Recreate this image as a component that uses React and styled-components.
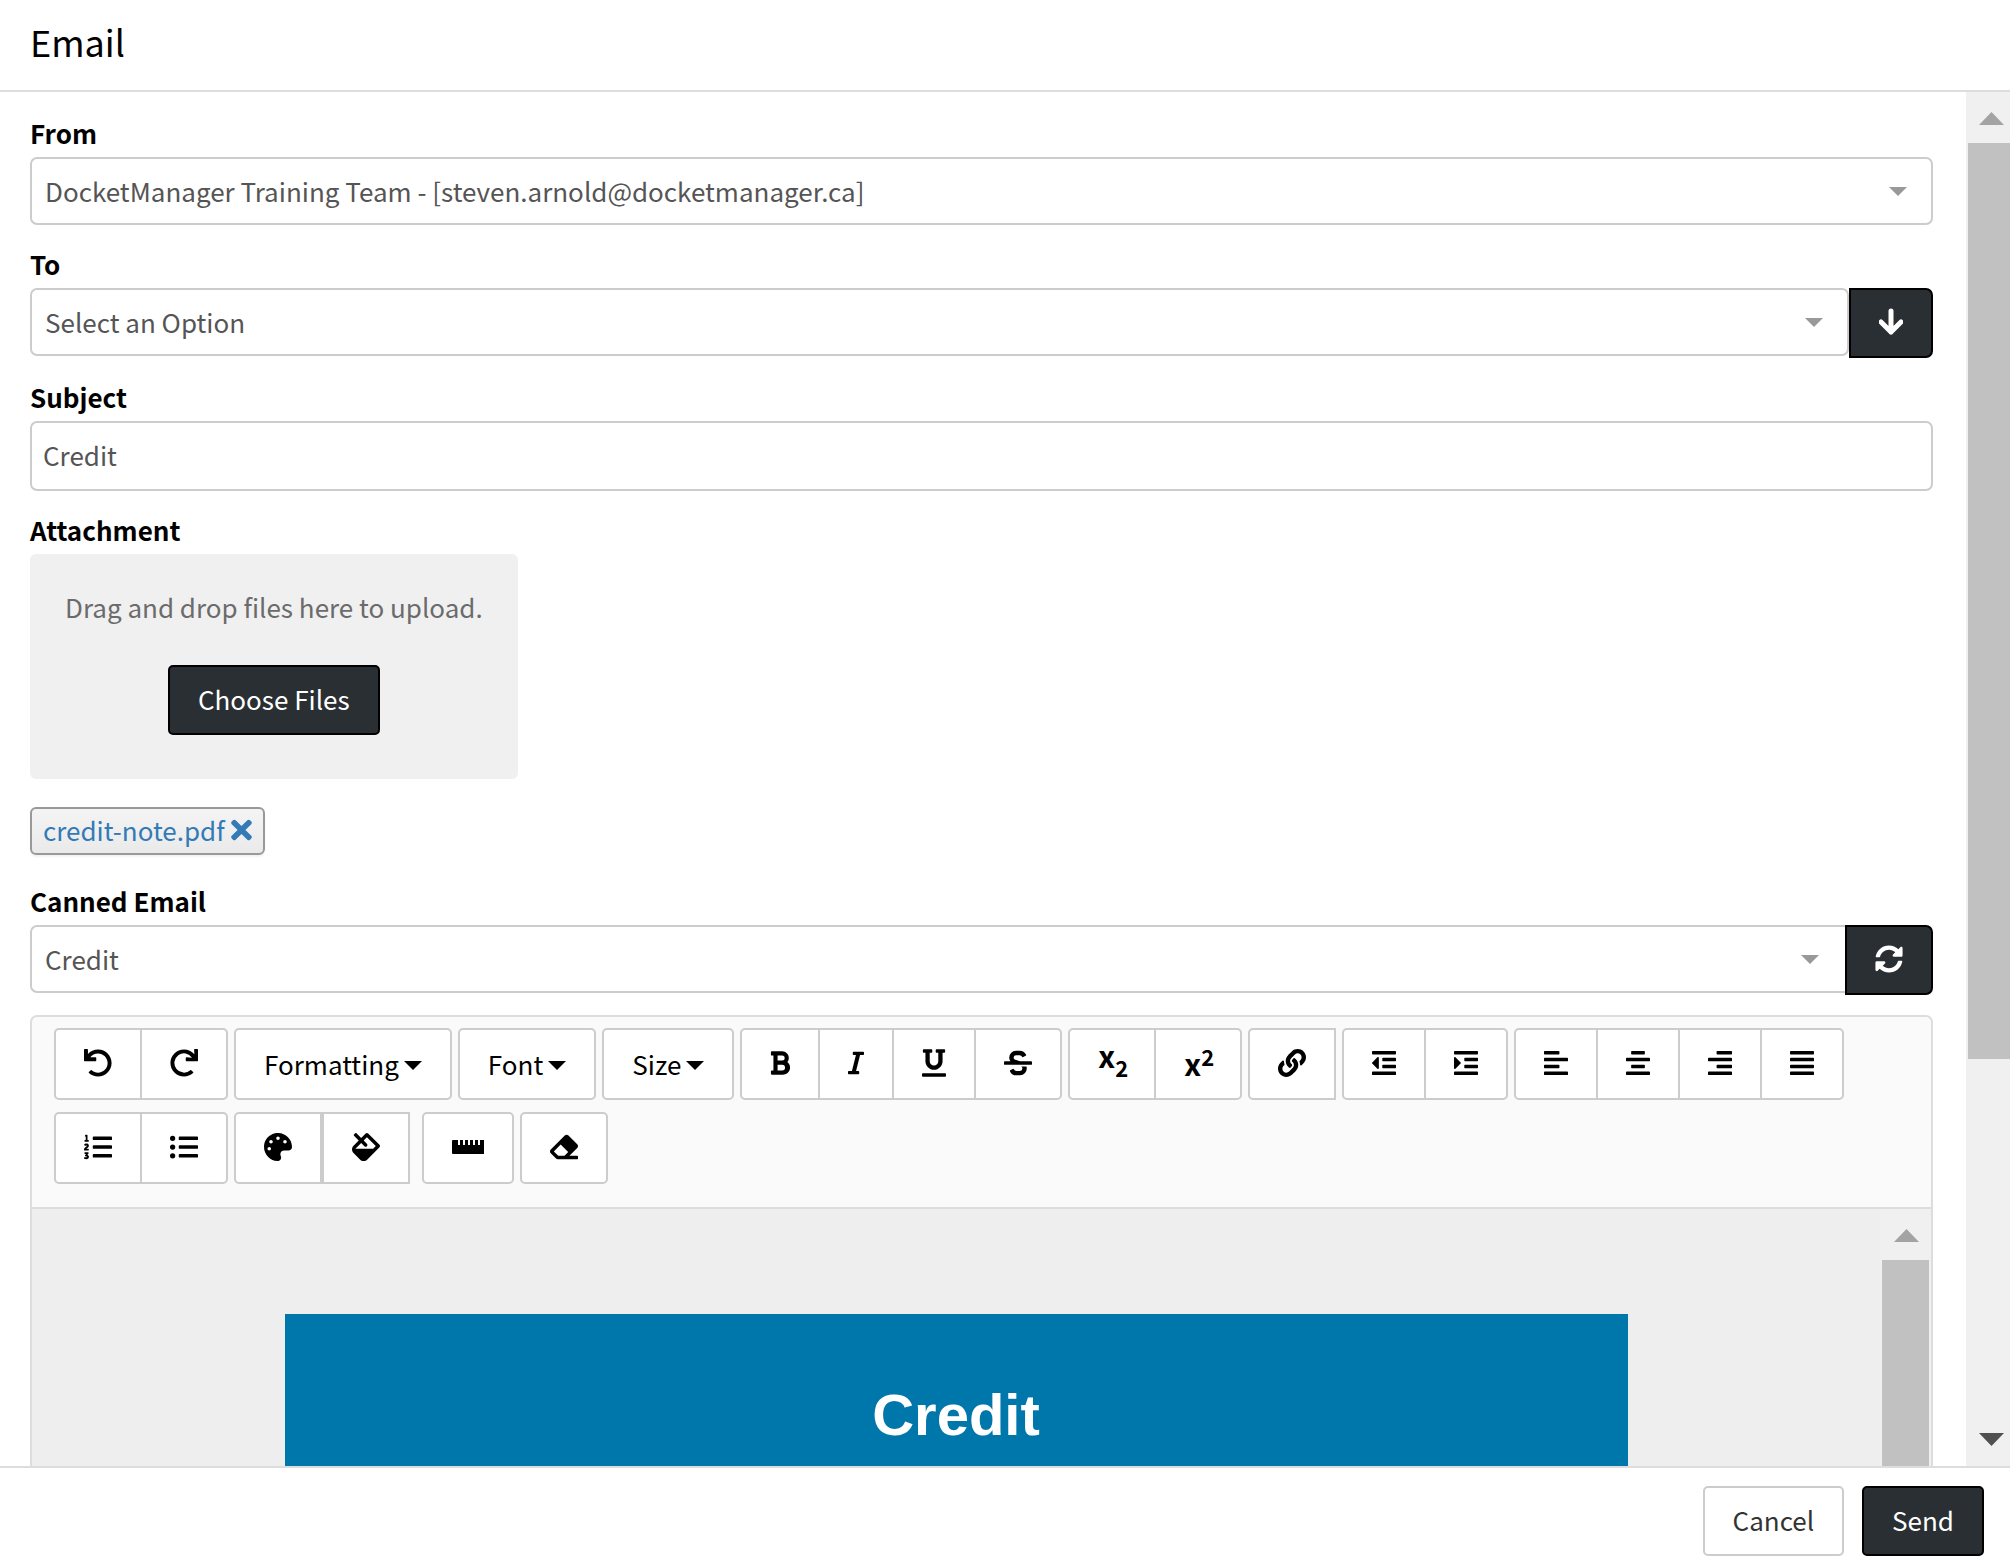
import styled, { createGlobalStyle, css } from 'styled-components'
import {
    FaAlignCenter,
    FaAlignJustify,
    FaAlignLeft,
    FaAlignRight,
    FaBold,
    FaEraser,
    FaFill,
    FaIndent,
    FaItalic,
    FaLink,
    FaListOl,
    FaListUl,
    FaOutdent,
    FaPalette,
    FaRedo,
    FaStrikethrough,
    FaSyncAlt,
    FaTimes,
    FaUnderline,
    FaUndo,
} from 'react-icons/fa'

const GlobalStyle = createGlobalStyle`
    * {
        box-sizing: border-box;
    }

    body {
        margin: 0;
        background: #fff;
    }

    body, button, input, select {
        font-family: 'Noto Sans CJK SC', 'Noto Sans', sans-serif;
        font-size: 26px;
    }
`;

const Dialog = styled.div`
    display: flex;
    flex-direction: column;
    height: 100vh;
    color: #000;
`;

const Header = styled.header`
    padding: 21px 30px 29px;
    border-bottom: 2px solid #ddd;
`;

const Title = styled.h1`
    margin: 0;
    font-size: 36px;
    font-weight: 400;
    line-height: 40px;
`;

const Main = styled.main`
    display: flex;
    flex: 1;
    min-height: 0;
`;

const Form = styled.form`
    flex: 1;
    min-width: 0;
    overflow: hidden;
    padding: 25px 33px 0 30px;
`;

const Field = styled.div`
    margin-bottom: ${props => props.$gap || '23px'};
`;

const Label = styled.label`
    display: block;
    margin-bottom: 8px;
    font-weight: 700;
    line-height: 32px;
`;

const InputGroup = styled.div`
    display: flex;
    align-items: flex-start;
`;

const SelectWrapper = styled.div`
    position: relative;
    flex: 1;
`;

const control = css`
    display: block;
    width: 100%;
    border: 2px solid #ccc;
    border-radius: 7px;
    background: #fff;
    color: #555;
`;

const SelectBox = styled.select`
    ${control}
    appearance: none;
    height: 68px;
    padding: 0 60px 2px 13px;
    ${props => props.$joined && 'border-right: 0; border-radius: 7px 0 0 7px;'}
`;

const TextInput = styled.input`
    ${control}
    height: 70px;
    padding: 0 11px 4px;
`;

const SelectArrow = styled.span`
    position: absolute;
    top: 30px;
    right: 26px;
    display: flex;
    color: #999;
    pointer-events: none;
`;

const Button = styled.button`
    height: 70px;
    padding: 0 28px 4px;
    border: 2px solid ${props => (props.$dark ? '#000' : '#ccc')};
    border-radius: 5px;
    background: ${props => (props.$dark ? '#2a2f33' : '#fff')};
    color: ${props => (props.$dark ? '#fff' : '#333')};
    cursor: pointer;
`;

const AddonButton = styled(Button)`
    display: grid;
    place-content: center;
    padding-bottom: 2px;
    border-radius: 0 7px 7px 0;
`;

const DropZone = styled.div`
    display: inline-flex;
    flex-direction: column;
    align-items: center;
    gap: 40px;
    padding: 35px 35px 44px;
    border-radius: 6px;
    background: #f0f0f0;
    color: #6b6b6b;
    line-height: 36px;
`;

const FileList = styled.div`
    display: flex;
    margin: 28px 0 30px;
`;

const FileChip = styled.div`
    display: flex;
    align-items: center;
    gap: 6px;
    height: 48px;
    padding: 0 11px 2px;
    border: 2px solid #999;
    border-radius: 6px;
    background: linear-gradient(#f4f4f4, #eaeaea);
    box-shadow: 0 2px 2px rgba(0, 0, 0, 0.05);
    line-height: 40px;
`;

const FileLink = styled.a`
    color: #337ab7;
    text-decoration: none;
`;

const RemoveButton = styled.button`
    display: flex;
    padding: 0;
    border: 0;
    background: none;
    color: #337ab7;
    cursor: pointer;

    svg {
        width: 21px;
        height: 30px;
    }
`;

const Toolbar = styled.div`
    display: flex;
    flex-wrap: wrap;
    gap: 12px 6px;
    padding: 11px 22px 23px;
    border: 2px solid #ddd;
    border-radius: 7px 7px 0 0;
    background: #fafafa;
`;

const ToolGroup = styled.div`
    display: flex;
    margin-right: ${props => (props.$spaced ? '6px' : '0')};
`;

const ToolButton = styled.button`
    display: flex;
    align-items: center;
    gap: 5px;
    height: 72px;
    padding: 0 28px 2px;
    border: 2px solid #ccc;
    background: #fff;
    color: #000;
    cursor: pointer;

    &:not(:first-child) {
        margin-left: ${props => (props.$apart ? '0' : '-2px')};
    }

    &:first-child {
        border-top-left-radius: 5px;
        border-bottom-left-radius: 5px;
    }

    &:last-child {
        border-top-right-radius: ${props => (props.$square ? '0' : '5px')};
        border-bottom-right-radius: ${props => (props.$square ? '0' : '5px')};
    }

    > svg {
        margin-top: 5px;
    }
`;

const ToolIcon = styled.span`
    display: flex;

    svg {
        width: ${props => props.$width || 28}px;
        height: 28px;
    }
`;

const Script = styled.span`
    width: 28px;
    padding-bottom: ${props => (props.$lowered ? '16px' : '0')};
    font-size: 30px;
    font-weight: 700;
    line-height: 28px;
    white-space: nowrap;

    sub, sup {
        font-size: 22px;
        line-height: 0;
    }

    sub {
        vertical-align: -9px;
    }

    sup {
        vertical-align: 10px;
    }
`;

const Editor = styled.div`
    display: flex;
    height: 640px;
    border: solid #ddd;
    border-width: 0 2px 2px;
    background: #eee;
`;

const Canvas = styled.div`
    flex: 1;
    padding: 105px 40px 0;
`;

const Banner = styled.div`
    max-width: 1343px;
    margin: 0 auto;
    padding: 68px 40px;
    background: #0077aa;
    color: #fff;
    font-family: 'Liberation Sans', Arial, sans-serif;
    font-size: 58px;
    font-weight: 700;
    line-height: 66px;
    text-align: center;
`;

const ScrollBar = styled.div`
    display: flex;
    flex-direction: column;
    width: ${props => props.$width};
    padding-left: 2px;
    background: #f0f0f0;
`;

const ScrollArrow = styled.span`
    display: grid;
    flex: none;
    place-content: center;
    height: 51px;
    padding: ${props => (props.$down ? '0 0 2px' : '2px 0 0')};
    padding-left: ${props => (props.$clipped ? '4px' : '0')};
    color: ${props => (props.$down ? '#505050' : '#a3a3a3')};
`;

const ScrollTrack = styled.div`
    flex: 1;
`;

const ScrollThumb = styled.div`
    height: ${props => props.$size};
    margin-right: ${props => props.$inset || '0'};
    background: #c1c1c1;
`;

const Footer = styled.footer`
    display: flex;
    justify-content: flex-end;
    gap: 18px;
    padding: 18px 26px 10px;
    border-top: 2px solid #ddd;
`;

const Triangle = ({ width, height, up }) => (
    <svg width={width} height={height} viewBox="0 0 20 10" preserveAspectRatio="none" fill="currentColor" aria-hidden="true">
        <path d={up ? 'M0 10 10 0 20 10z' : 'M0 0h20L10 10z'} />
    </svg>
)

const ArrowDown = () => (
    <svg width="24" height="28" viewBox="0 0 24 28" fill="none" stroke="currentColor" strokeWidth="5" strokeLinecap="round" strokeLinejoin="round" aria-hidden="true">
        <path d="M12 3v21M2 14l10 10 10-10" />
    </svg>
)

const RulerIcon = () => (
    <svg viewBox="0 0 32 28" fill="currentColor" aria-hidden="true">
        <path d="M1 7h5v5h2V7h3v5h2V7h3v5h2V7h3v5h2V7h3v5h2V7h4q1 0 1 1v12q0 1-1 1H1q-1 0-1-1V8q0-1 1-1z" />
    </svg>
)

const toolGroups = [
    { tools: [{ name: 'Undo', icon: <FaUndo /> }, { name: 'Redo', icon: <FaRedo /> }] },
    { tools: [{ name: 'Formatting', menu: true }] },
    { tools: [{ name: 'Font', menu: true }] },
    { tools: [{ name: 'Size', menu: true }] },
    {
        tools: [
            { name: 'Bold', icon: <FaBold />, width: 20 },
            { name: 'Italic', icon: <FaItalic />, width: 16 },
            { name: 'Underline', icon: <FaUnderline />, width: 24 },
            { name: 'Strikethrough', icon: <FaStrikethrough /> },
        ],
    },
    {
        tools: [
            { name: 'Subscript', icon: <Script $lowered>x<sub>2</sub></Script> },
            { name: 'Superscript', icon: <Script>x<sup>2</sup></Script> },
        ],
    },
    { square: true, tools: [{ name: 'Link', icon: <FaLink /> }] },
    {
        tools: [
            { name: 'Outdent', icon: <FaOutdent />, width: 24 },
            { name: 'Indent', icon: <FaIndent />, width: 24 },
        ],
    },
    {
        tools: [
            { name: 'Align left', icon: <FaAlignLeft />, width: 24 },
            { name: 'Align center', icon: <FaAlignCenter />, width: 24 },
            { name: 'Align right', icon: <FaAlignRight />, width: 24 },
            { name: 'Justify', icon: <FaAlignJustify />, width: 24 },
        ],
    },
    { tools: [{ name: 'Numbered list', icon: <FaListOl /> }, { name: 'Bulleted list', icon: <FaListUl /> }] },
    {
        square: true,
        apart: true,
        spaced: true,
        tools: [{ name: 'Text color', icon: <FaPalette /> }, { name: 'Background color', icon: <FaFill /> }],
    },
    { tools: [{ name: 'Horizontal rule', icon: <RulerIcon />, width: 32 }] },
    { tools: [{ name: 'Clear formatting', icon: <FaEraser /> }] },
]

const Select = ({ id, value, joined }) => (
    <SelectWrapper>
        <SelectBox id={id} $joined={joined} defaultValue={value}>
            <option>{value}</option>
        </SelectBox>
        <SelectArrow><Triangle width={18} height={9} /></SelectArrow>
    </SelectWrapper>
)

const EditorToolbar = () => (
    <Toolbar role="toolbar" aria-label="Editor">
        {toolGroups.map(({ tools, square, apart, spaced }) => (
            <ToolGroup key={tools[0].name} $spaced={spaced}>
                {tools.map(({ name, icon, width, menu }) => (
                    <ToolButton key={name} type="button" aria-label={name} $square={square} $apart={apart}>
                        {menu ? <>{name}<Triangle width={18} height={9} /></> : <ToolIcon $width={width}>{icon}</ToolIcon>}
                    </ToolButton>
                ))}
            </ToolGroup>
        ))}
    </Toolbar>
)

const App = () => {
    return (
        <Dialog>
            <GlobalStyle />
            <Header>
                <Title>Email</Title>
            </Header>
            <Main>
                <Form>
                    <Field>
                        <Label htmlFor="from">From</Label>
                        <Select id="from" value="DocketManager Training Team - [steven.arnold@docketmanager.ca]" />
                    </Field>
                    <Field>
                        <Label htmlFor="to">To</Label>
                        <InputGroup>
                            <Select id="to" value="Select an Option" />
                            <AddonButton type="button" $dark aria-label="Add recipient"><ArrowDown /></AddonButton>
                        </InputGroup>
                    </Field>
                    <Field>
                        <Label htmlFor="subject">Subject</Label>
                        <TextInput id="subject" type="text" defaultValue="Credit" />
                    </Field>
                    <Label as="div">Attachment</Label>
                    <DropZone>
                        Drag and drop files here to upload.
                        <Button type="button" $dark>Choose Files</Button>
                    </DropZone>
                    <FileList>
                        <FileChip>
                            <FileLink href="#credit-note">credit-note.pdf</FileLink>
                            <RemoveButton type="button" aria-label="Remove credit-note.pdf"><FaTimes /></RemoveButton>
                        </FileChip>
                    </FileList>
                    <Field $gap="20px">
                        <Label htmlFor="canned">Canned Email</Label>
                        <InputGroup>
                            <Select id="canned" value="Credit" joined />
                            <AddonButton type="button" $dark aria-label="Reload canned email"><FaSyncAlt size={28} /></AddonButton>
                        </InputGroup>
                    </Field>
                    <EditorToolbar />
                    <Editor>
                        <Canvas>
                            <Banner>Credit</Banner>
                        </Canvas>
                        <ScrollBar $width="51px">
                            <ScrollArrow><Triangle width={25} height={13} up /></ScrollArrow>
                            <ScrollTrack><ScrollThumb $size="70%" $inset="2px" /></ScrollTrack>
                        </ScrollBar>
                    </Editor>
                </Form>
                <ScrollBar $width="44px">
                    <ScrollArrow $clipped><Triangle width={25} height={13} up /></ScrollArrow>
                    <ScrollTrack><ScrollThumb $size="72%" /></ScrollTrack>
                    <ScrollArrow $down $clipped><Triangle width={25} height={13} /></ScrollArrow>
                </ScrollBar>
            </Main>
            <Footer>
                <Button type="button">Cancel</Button>
                <Button type="button" $dark>Send</Button>
            </Footer>
        </Dialog>
    )
}

export default App
